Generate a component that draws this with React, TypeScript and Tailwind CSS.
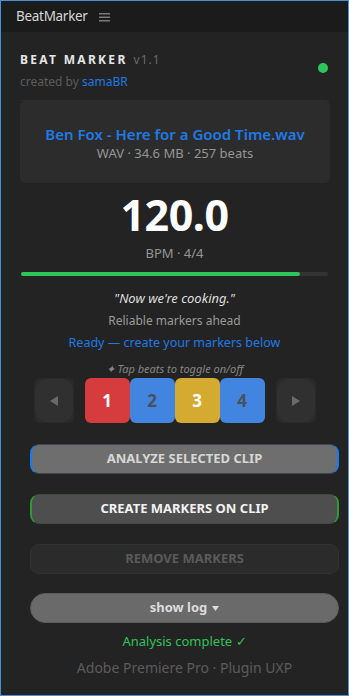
import React from "react";

const font = { fontFamily: '"Noto Sans", "Open Sans", sans-serif' };

function Arrow({ dir }: { dir: "left" | "right" }) {
  return (
    <div className="w-[40px] h-[45px] rounded-[6px] bg-[#2a2a2a] flex items-center justify-center">
      <div className="w-[38px] h-[43px] rounded-[12px] bg-[#303030] flex items-center justify-center">
        <svg width="10" height="12" viewBox="0 0 10 12">
          {dir === "left" ? (
            <polygon points="9,1 9,11 1,6" fill="#6a6a6a" />
          ) : (
            <polygon points="1,1 1,11 9,6" fill="#6a6a6a" />
          )}
        </svg>
      </div>
    </div>
  );
}

export default function App() {
  const beats = [
    { n: "1", bg: "bg-[#d63b3d]", fg: "text-white" },
    { n: "2", bg: "bg-[#4285e0]", fg: "text-[#4a4f58]" },
    { n: "3", bg: "bg-[#d5aa30]", fg: "text-white" },
    { n: "4", bg: "bg-[#4285e0]", fg: "text-[#4a4f58]" },
  ];
  return (
    <div style={font} className="w-[349px] h-[696px] border border-[#4a8fdc] bg-[#232323] flex flex-col overflow-hidden">
      <div className="h-[31px] bg-[#1b1b1b] flex items-center pl-[15px] shrink-0">
        <span className="text-[13.5px] text-[#d6d6d6] leading-none tracking-[-0.3px]">BeatMarker</span>
        <svg className="ml-[11px]" width="11" height="10" viewBox="0 0 11 10">
          <rect x="0" y="1" width="11" height="1.5" fill="#7a7a7a" />
          <rect x="0" y="4.5" width="11" height="1.5" fill="#7a7a7a" />
          <rect x="0" y="8" width="11" height="1.5" fill="#7a7a7a" />
        </svg>
      </div>

      <div className="px-[19px] flex flex-col">
        <div className="h-[69px] flex items-start justify-between border-b border-[#2d2d2d] pt-[20px]">
          <div className="flex flex-col">
            <div className="flex items-baseline gap-[6px] leading-[16px]">
              <span className="text-[12px] font-bold tracking-[2.3px] text-[#e6e6e6]">BEAT MARKER</span>
              <span className="text-[12px] tracking-[1px] text-[#6a6a6a]">v1.1</span>
            </div>
            <div className="text-[12px] mt-[6px] text-[#5c5c5c] leading-[16px]">
              created by <span className="text-[#1f7ae6]">samaBR</span>
            </div>
          </div>
          <div className="w-[10px] h-[10px] rounded-full bg-[#2ec55a] mt-[11px] mr-[1px]" />
        </div>

        <div className="h-[82px] rounded-[5px] bg-[#2c2c2c] flex flex-col items-center justify-center mr-[-1px]">
          <div className="text-[15px] font-semibold text-[#1f7ae6] leading-[20px] mt-[2px]">Ben Fox - Here for a Good Time.wav</div>
          <div className="text-[13px] text-[#959595] leading-[18px]">WAV · 34.6 MB · 257 beats</div>
        </div>

        <div className="flex flex-col items-center">
          <div className="text-[43px] font-bold text-white leading-[48px] mt-[8px] tracking-[-0.5px]">120.0</div>
          <div className="text-[13px] text-[#959595] leading-[18px] mt-[5px]">BPM · 4/4</div>
        </div>

        <div className="h-[4px] rounded-full bg-[#333333] mt-[10px] mx-[1px]">
          <div className="h-full rounded-full bg-[#2ec55a]" style={{ width: "91%" }} />
        </div>

        <div className="flex flex-col items-center mt-[13px]">
          <div className="text-[13px] italic text-[#dedede] leading-[18px]">"Now we're cooking."</div>
          <div className="text-[12px] text-[#9a9a9a] leading-[18px] mt-[5px]">Reliable markers ahead</div>
          <div className="text-[12.5px] text-[#1f7ae6] leading-[18px] mt-[4px]">Ready — create your markers below</div>
          <div className="text-[11px] italic text-[#858585] leading-[14px] mt-[10px]">✦ Tap beats to toggle on/off</div>
        </div>

        <div className="flex items-center justify-center mt-[2px] gap-[11px]">
          <Arrow dir="left" />
          <div className="flex">
            {beats.map((b) => (
              <div key={b.n} className={`w-[45px] h-[45px] rounded-[6px] ${b.bg} flex items-center justify-center`}>
                <span className={`text-[17px] font-bold ${b.fg}`}>{b.n}</span>
              </div>
            ))}
          </div>
          <Arrow dir="right" />
        </div>

        <div className="ml-[10px] -mr-[10px] flex flex-col mt-[21px]">
          <div className="h-[30px] rounded-[9px] bg-[#6e6e6e] border-x-2 border-x-[#1a7af0] border-y border-y-[#3e4650] flex items-center justify-center">
            <span className="text-[13px] font-bold text-[#d6d6d6]">ANALYZE SELECTED CLIP</span>
          </div>
          <div className="h-[30px] mt-[20px] rounded-[9px] bg-[#4e4e4e] border-x-2 border-x-[#2f9a38] border-y border-y-[#3d4a3d] flex items-center justify-center">
            <span className="text-[13px] font-bold text-[#f2f2f2]">CREATE MARKERS ON CLIP</span>
          </div>
          <div className="h-[30px] mt-[20px] rounded-[9px] bg-[#2b2b2b] border border-[#323232] flex items-center justify-center">
            <span className="text-[13px] font-bold text-[#5a5a5a]">REMOVE MARKERS</span>
          </div>
          <div className="h-[30px] mt-[19px] rounded-full bg-[#6a6a6a] border border-[#5a5a5a] flex items-center justify-center gap-[5px]">
            <span className="text-[13px] font-bold text-[#dcdcdc]">show log</span>
            <svg width="7" height="5" viewBox="0 0 7 5"><polygon points="0,0 7,0 3.5,5" fill="#dcdcdc" /></svg>
          </div>
          <div className="text-center text-[13px] text-[#2ec55a] leading-[18px] mt-[9px]">Analysis complete ✓</div>
          <div className="text-center text-[14px] text-[#5c5c5c] leading-[18px] mt-[9px]">Adobe Premiere Pro · Plugin UXP</div>
        </div>
      </div>
    </div>
  );
}
